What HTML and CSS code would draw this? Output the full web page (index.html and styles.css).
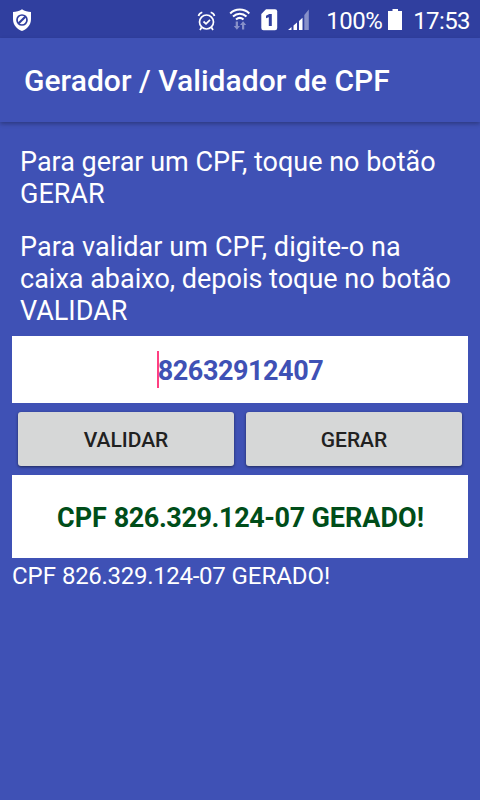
FILE: index.html
```
<!DOCTYPE html>
<html lang="pt-BR">
<head>
<meta charset="utf-8">
<title>Gerador / Validador de CPF</title>
<link rel="stylesheet" href="styles.css">
</head>
<body>
<div class="statusbar">
  <svg class="shield" width="20" height="24" viewBox="0 0 20 24">
    <path fill="#fff" d="M10 1.2 C7.5 3 4 4 1 4 V11 C1 17 5 21 10 23 C15 21 19 17 19 11 V4 C16 4 12.500 3 10 1.200Z"/>
    <circle cx="10" cy="12" r="5" fill="none" stroke="#303f9f" stroke-width="1.7"/>
    <path d="M6.700 15.300 L13.300 8.700" stroke="#303f9f" stroke-width="2.200"/>
  </svg>
  <div class="indicators">
    <svg class="alarm" width="20" height="22" viewBox="0 0 20 22" fill="none" stroke="#fff" stroke-width="1.700">
      <circle cx="9.500" cy="12" r="7"/>
      <path d="M6.500 11.500 L9 13.800 L13 9.800 M1.500 6 C2 4 3.500 2.800 5.300 2.300 M17.500 6 C17 4 15.500 2.800 13.700 2.300 M4.500 17.500 L3 20 M14.500 17.500 L16 20"/>
    </svg>
    <svg class="wifi" width="22" height="24" viewBox="0 0 22 24">
      <path fill="none" stroke="#fff" stroke-width="2" d="M1.200 6.500 C6.500 1.300 15 1.300 20.300 6.500 M4 9.600 C8 5.900 13.500 5.900 17.500 9.600 M7 12.600 C9.300 10.500 12.200 10.500 14.500 12.600"/>
      <path fill="#8790c9" d="M6.700 14.500 H9 V19 H11 L7.900 22.700 L4.800 19 H6.700Z M13 22.500 V18 H11 L14.100 14.300 L17.200 18 H15.200 V22.500Z"/>
    </svg>
    <svg class="sim" width="17" height="22" viewBox="0 0 17 22">
      <path fill="#fff" d="M5 .3 H14 Q16.200 .3 16.200 2.500 V19 Q16.200 21.200 14 21.200 H2.500 Q.3 21.200 .3 19 V5Z"/>
      <path fill="#303f9f" d="M8.200 5 H10.800 V17 H7.800 V8.300 L5 9.300 V6.700Z"/>
    </svg>
    <svg class="signal" width="22" height="22" viewBox="0 0 22 22">
      <path fill="#fff" d="M0 21 L3.500 18 V21Z M5.500 16.500 L9 13.500 V21 H5.500Z M11 12 L14.500 8.800 V21 H11Z"/>
      <path fill="#8790c9" d="M16.300 6 L20.800 .5 V21 H16.300Z"/>
    </svg>
    <span class="percent">100%</span>
    <svg class="battery" width="14" height="21" viewBox="0 0 14 21"><path fill="#fff" d="M4.500 0 H10 V2 H14 V21 H0 V2 H4.500Z"/></svg>
    <span class="clock">17:53</span>
  </div>
</div>
<header class="appbar"><h1>Gerador / Validador de CPF</h1></header>
<main class="content">
  <p>Para gerar um CPF, toque no botão GERAR</p>
  <p><span class="loose">Para validar um CPF, digite-o na</span> caixa abaixo, depois toque no botão VALIDAR</p>
  <div class="field"><span class="caret"></span><span class="digits">82632912407</span></div>
  <div class="buttons">
    <button type="button">VALIDAR</button>
    <button type="button">GERAR</button>
  </div>
  <div class="result"><div>CPF <span class="digits">826.329.124-07</span> GERADO!</div></div>
  <div class="log">CPF <span class="digits">826.329.124-07</span> GERADO!</div>
</main>
</body>
</html>
```
FILE: styles.css
```
* { box-sizing: border-box; }
body {
  margin: 0;
  width: 480px;
  height: 800px;
  overflow: hidden;
  background: #3f51b5;
  color: #fff;
  font-family: Roboto, sans-serif;
}
.statusbar {
  display: flex;
  justify-content: space-between;
  height: 38px;
  padding: 8px 10px 0 12px;
  background: #303f9f;
}
.statusbar svg { display: block; flex: none; }
.indicators { display: flex; align-items: flex-start; }
.alarm { margin: 2px 12px 0 0; }
.wifi { margin: -1px 10px 0 0; }
.sim { margin: 1px 10px 0 0; }
.signal { margin: 1px 16px 0 0; }
.battery { margin: 1px 11px 0 6px; }
.percent, .clock { font-size: 24px; line-height: 26px; }
.percent { letter-spacing: -.5px; }
.clock { letter-spacing: -.6px; }
.appbar {
  height: 84px;
  padding-left: 24px;
  box-shadow: 0 2px 4px rgba(0, 0, 0, .28);
}
h1 { margin: 0; font-size: 30px; font-weight: 500; line-height: 86px; letter-spacing: .04px; }
.content { padding: 24px 12px 0; }
p { margin: 0 8px 21px; font-size: 27px; line-height: 32px; }
p + p { margin-bottom: 9px; }
.loose { letter-spacing: .1px; }
.digits { letter-spacing: -.4px; }
.field, .result {
  display: flex;
  align-items: center;
  justify-content: center;
  background: #fff;
  font-size: 27px;
  font-weight: 700;
}
.field { height: 67px; color: #3f51b5; padding: 2px 0 0 1px; }
.field .digits { letter-spacing: -.45px; }
.caret { width: 2px; height: 37px; margin: -2px -1px 0; background: #ff4081; }
.buttons { display: flex; gap: 12px; padding: 9px 6px; }
button {
  flex: 1;
  height: 54px;
  padding: 2px 0 0;
  border: 0;
  border-radius: 3px;
  background: #d6d7d7;
  box-shadow: 0 1px 3px rgba(0, 0, 0, .5);
  color: #212121;
  font: 500 21px Roboto, sans-serif;
}
.result { height: 83px; padding: 2px 0 0 1px; color: #004d19; }
.log { margin-top: 4px; font-size: 24px; line-height: 28px; }
.log .digits { letter-spacing: -.3px; }
```
